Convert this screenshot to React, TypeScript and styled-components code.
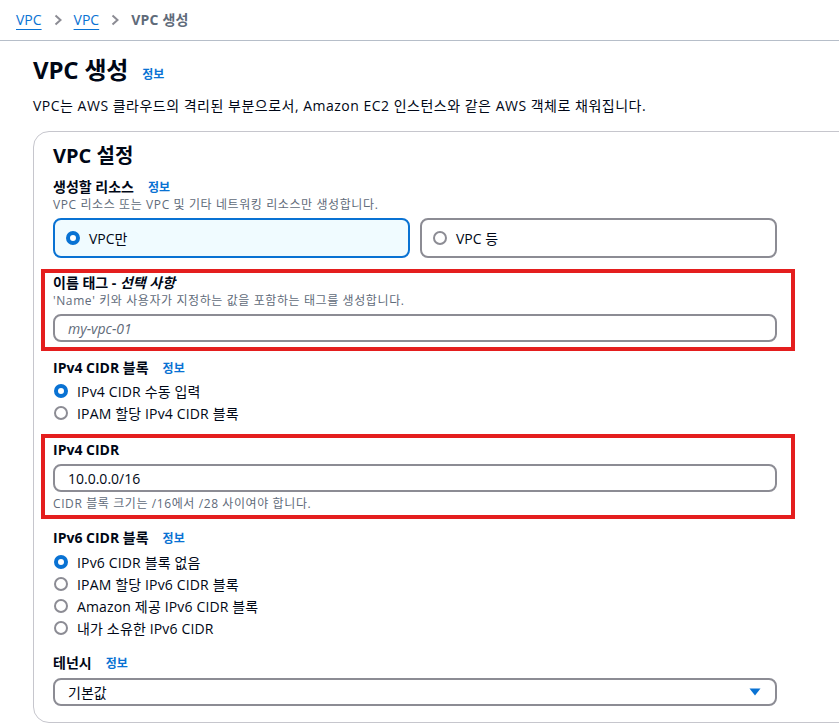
import React from "react";
import styled, { createGlobalStyle } from "styled-components";

const FONT = `"Open Sans", "Noto Sans CJK KR", sans-serif`;

const Global = createGlobalStyle`
  html, body { margin: 0; padding: 0; overflow: hidden; background: #fff; }
  body { font-family: ${FONT}; color: #000716; font-size: 14px; }
  * { box-sizing: border-box; }
`;

const Breadcrumbs = styled.nav`
  height: 41px;
  display: flex;
  align-items: center;
  gap: 11px;
  padding: 0 0 1px 16px;
  border-bottom: 1px solid #b6bec9;
  font-size: 14px;
  line-height: 20px;
`;

const Crumb = styled.a`
  color: #0972d3;
  text-decoration: underline;
  text-underline-offset: 4px;
  text-decoration-thickness: 1px;
`;

const CrumbCurrent = styled.span`
  color: #5f6b7a;
  font-weight: 700;
  letter-spacing: 0.2px;
`;

const Chevron = styled.svg`
  width: 10px;
  height: 12px;
  display: block;
`;

const Main = styled.main`
  padding: 0 0 0 33px;
`;

const TitleRow = styled.div`
  display: flex;
  align-items: baseline;
  gap: 14px;
  margin-top: 14px;
`;

const H1 = styled.h1`
  margin: 0;
  font-size: 24px;
  line-height: 30px;
  font-weight: 700;
  letter-spacing: -0.2px;
`;

const InfoLink = styled.a`
  color: #0972d3;
  font-size: 12px;
  font-weight: 700;
  line-height: 16px;
  text-decoration: none;
  letter-spacing: 0;
`;

const Lead = styled.p`
  margin: 11px 0 0;
  font-size: 14px;
  line-height: 20px;
  letter-spacing: 0.5px;
`;

const Card = styled.section`
  margin-top: 15px;
  width: 900px;
  border: 1px solid #c6c6cd;
  border-radius: 16px;
  padding: 12px 20px 16px 19px;
`;

const Form = styled.div`
  width: 724px;
  display: flex;
  flex-direction: column;
`;

const H2 = styled.h2`
  margin: 0;
  font-size: 20px;
  line-height: 24px;
  font-weight: 700;
`;

const Label = styled.div<{ $mt?: number }>`
  margin-top: ${(p) => p.$mt ?? 0}px;
  display: flex;
  align-items: baseline;
  gap: 14px;
  font-size: 14px;
  line-height: 20px;
  font-weight: 700;
  em { font-style: italic; }
`;

const Desc = styled.div<{ $mt?: number }>`
  margin-top: ${(p) => p.$mt ?? 0}px;
  font-size: 12px;
  line-height: 16px;
  color: #5f6b7a;
  letter-spacing: 0.6px;
`;

const Tiles = styled.div`
  margin-top: 5px;
  display: grid;
  grid-template-columns: 1fr 1fr;
  gap: 10px;
`;

const Tile = styled.div<{ $selected?: boolean }>`
  height: 40px;
  display: flex;
  align-items: center;
  gap: 9px;
  padding-left: 11px;
  border: 2px solid ${(p) => (p.$selected ? "#0972d3" : "#8c8c94")};
  background: ${(p) => (p.$selected ? "#f0fbff" : "#fff")};
  border-radius: 8px;
  font-size: 14px;
`;

const Radio = styled.span<{ $checked?: boolean }>`
  width: 14px;
  height: 14px;
  border-radius: 50%;
  flex: none;
  background: #fff;
  border: ${(p) => (p.$checked ? "4.5px solid #0972d3" : "2px solid #8c8c94")};
`;

const RadioGroup = styled.div<{ $mt?: number }>`
  margin-top: ${(p) => p.$mt ?? 0}px;
  display: flex;
  flex-direction: column;
`;

const RadioRow = styled.label`
  height: 22px;
  display: flex;
  align-items: center;
  gap: 9px;
  padding-left: 1px;
  font-size: 14px;
  letter-spacing: 0.15px;
`;

const Highlight = styled.div<{ $mt: number; $pt: number; $pb: number }>`
  margin: ${(p) => p.$mt}px -18px 0 -12px;
  border: 4px solid #e41e1e;
  padding: ${(p) => p.$pt}px 14px ${(p) => p.$pb}px 8px;
  display: flex;
  flex-direction: column;
`;

const Input = styled.div<{ $mt?: number; $placeholder?: boolean }>`
  margin-top: ${(p) => p.$mt ?? 0}px;
  height: 28px;
  border: 2px solid #8c8c94;
  border-radius: 8px;
  padding: 0 13px;
  display: flex;
  align-items: center;
  font-size: 14px;
  color: ${(p) => (p.$placeholder ? "#5f6b7a" : "#000716")};
  font-style: ${(p) => (p.$placeholder ? "italic" : "normal")};
`;

const Select = styled(Input)`
  justify-content: space-between;
  padding-right: 14px;
`;

const Caret = styled.svg`
  width: 12px;
  height: 8px;
  display: block;
`;

const ChevronIcon = () => (
  <Chevron viewBox="0 0 10 12">
    <path d="M2.5 1.5 L7.5 6 L2.5 10.5" fill="none" stroke="#8c8c94" strokeWidth="2" />
  </Chevron>
);

export default function App() {
  return (
    <>
      <Global />
      <Breadcrumbs>
        <Crumb>VPC</Crumb>
        <ChevronIcon />
        <Crumb>VPC</Crumb>
        <ChevronIcon />
        <CrumbCurrent>VPC 생성</CrumbCurrent>
      </Breadcrumbs>
      <Main>
        <TitleRow>
          <H1>VPC 생성</H1>
          <InfoLink>정보</InfoLink>
        </TitleRow>
        <Lead>VPC는 AWS 클라우드의 격리된 부분으로서, Amazon EC2 인스턴스와 같은 AWS 객체로 채워집니다.</Lead>
        <Card>
          <Form>
            <H2>VPC 설정</H2>
            <Label $mt={9}>
              생성할 리소스 <InfoLink>정보</InfoLink>
            </Label>
            <Desc>VPC 리소스 또는 VPC 및 기타 네트워킹 리소스만 생성합니다.</Desc>
            <Tiles>
              <Tile $selected>
                <Radio $checked />
                VPC만
              </Tile>
              <Tile>
                <Radio />
                VPC 등
              </Tile>
            </Tiles>

            <Highlight $mt={11} $pt={0} $pb={5}>
              <Label>
                <span>
                  이름 태그 - <em>선택 사항</em>
                </span>
              </Label>
              <Desc>'Name' 키와 사용자가 지정하는 값을 포함하는 태그를 생성합니다.</Desc>
              <Input $mt={5} $placeholder>my-vpc-01</Input>
            </Highlight>

            <Label $mt={7}>
              IPv4 CIDR 블록 <InfoLink>정보</InfoLink>
            </Label>
            <RadioGroup $mt={2}>
              <RadioRow>
                <Radio $checked />
                IPv4 CIDR 수동 입력
              </RadioRow>
              <RadioRow>
                <Radio />
                IPAM 할당 IPv4 CIDR 블록
              </RadioRow>
            </RadioGroup>

            <Highlight $mt={10} $pt={2} $pb={3}>
              <Label>IPv4 CIDR</Label>
              <Input $mt={4}>10.0.0.0/16</Input>
              <Desc $mt={4}>CIDR 블록 크기는 /16에서 /28 사이여야 합니다.</Desc>
            </Highlight>

            <Label $mt={9}>
              IPv6 CIDR 블록 <InfoLink>정보</InfoLink>
            </Label>
            <RadioGroup $mt={3}>
              <RadioRow>
                <Radio $checked />
                IPv6 CIDR 블록 없음
              </RadioRow>
              <RadioRow>
                <Radio />
                IPAM 할당 IPv6 CIDR 블록
              </RadioRow>
              <RadioRow>
                <Radio />
                Amazon 제공 IPv6 CIDR 블록
              </RadioRow>
              <RadioRow>
                <Radio />
                내가 소유한 IPv6 CIDR
              </RadioRow>
            </RadioGroup>

            <Label $mt={14}>
              테넌시 <InfoLink>정보</InfoLink>
            </Label>
            <Select $mt={5}>
              기본값
              <Caret viewBox="0 0 12 8">
                <path d="M0.5 0.5 H11.5 L6 7.5 Z" fill="#0972d3" />
              </Caret>
            </Select>
          </Form>
        </Card>
      </Main>
    </>
  );
}
